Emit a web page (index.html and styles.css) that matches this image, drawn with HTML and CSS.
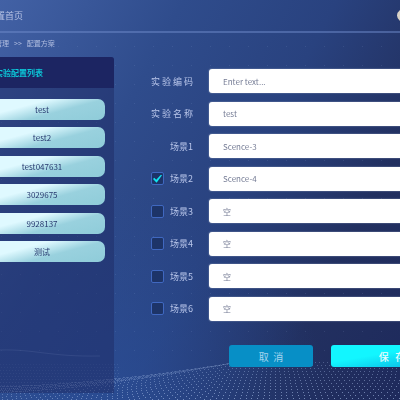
FILE: index.html
```html
<!DOCTYPE html>
<html lang="zh-CN">
<head>
<meta charset="UTF-8">
<meta name="viewport" content="width=device-width, initial-scale=1.0">
<title>配置方案</title>
<link rel="stylesheet" href="styles.css">
</head>
<body>
<canvas id="wave" class="wave"></canvas>
<div class="screen">
<div class="page">
    <header class="header">
        <a href="#" class="home-link">配置首页</a>
        <span class="avatar"></span>
    </header>
    <nav class="breadcrumb">
        <a href="#">管理</a>
        <span>&gt;&gt;</span>
        <a href="#">配置方案</a>
    </nav>
    <div class="main">
        <aside class="sidebar">
            <h2>实验配置列表</h2>
            <div class="config-list">
                <button type="button">test</button>
                <button type="button">test2</button>
                <button type="button">test047631</button>
                <button type="button">3029675</button>
                <button type="button">9928137</button>
                <button type="button">测试</button>
            </div>
        </aside>
        <form class="config-form">
            <div class="fields">
                <div class="row">
                    <div class="row-label"><label for="code">实 验 编 码</label></div>
                    <input type="text" id="code" placeholder="Enter text...">
                </div>
                <div class="row">
                    <div class="row-label"><label for="name">实 验 名 称</label></div>
                    <input type="text" id="name" value="test">
                </div>
                <div class="row">
                    <div class="row-label"><label for="scene1">场景1</label></div>
                    <input type="text" id="scene1" value="Scence-3">
                </div>
                <div class="row">
                    <div class="row-label">
                        <input type="checkbox" aria-label="启用场景2" checked>
                        <label for="scene2">场景2</label>
                    </div>
                    <input type="text" id="scene2" value="Scence-4">
                </div>
                <div class="row">
                    <div class="row-label">
                        <input type="checkbox" aria-label="启用场景3">
                        <label for="scene3">场景3</label>
                    </div>
                    <input type="text" id="scene3" value="空">
                </div>
                <div class="row">
                    <div class="row-label">
                        <input type="checkbox" aria-label="启用场景4">
                        <label for="scene4">场景4</label>
                    </div>
                    <input type="text" id="scene4" value="空">
                </div>
                <div class="row">
                    <div class="row-label">
                        <input type="checkbox" aria-label="启用场景5">
                        <label for="scene5">场景5</label>
                    </div>
                    <input type="text" id="scene5" value="空">
                </div>
                <div class="row">
                    <div class="row-label">
                        <input type="checkbox" aria-label="启用场景6">
                        <label for="scene6">场景6</label>
                    </div>
                    <input type="text" id="scene6" value="空">
                </div>
            </div>
            <div class="actions">
                <button type="button" class="cancel-button">取&nbsp;&nbsp;消</button>
                <button type="button" class="save-button">保&nbsp;&nbsp;&nbsp;存</button>
            </div>
        </form>
    </div>
</div>
</div>
<script src="wave.js"></script>
</body>
</html>
```

FILE: styles.css
```css
* {
    box-sizing: border-box;
    font-family: "Noto Sans CJK SC", "Noto Sans", sans-serif;
}

body {
    margin: 0;
    min-height: 100vh;
    background:
        radial-gradient(circle at 25% 105%, rgba(42, 82, 160, 0.6), transparent 45%),
        linear-gradient(118deg, #4261a5 0%, #2f4c8c 30%, #29427f 55%, #223060 78%, #1e2a5c 100%);
}

.wave {
    position: fixed;
    top: 0;
    left: 0;
    width: 100%;
    height: 100%;
}

.screen {
    position: relative;
    overflow: hidden;
}

.page {
    margin: 0 -30px;
}

.header {
    display: flex;
    justify-content: space-between;
    align-items: center;
    height: 33px;
    padding: 0 14px 0 17px;
    border-bottom: 2px solid rgba(110, 138, 202, 0.5);
}

.home-link {
    font-size: 9px;
    color: #b7c3e4;
    text-decoration: none;
}

.avatar {
    width: 19px;
    height: 15px;
    border-radius: 50%;
    background: #d9d3c8;
}

.breadcrumb {
    display: flex;
    align-items: center;
    gap: 5px;
    height: 20px;
    padding-left: 25px;
    font-size: 7px;
    color: #b0bde0;
}

.breadcrumb a {
    color: inherit;
    text-decoration: none;
}

.main {
    display: flex;
    align-items: flex-start;
    gap: 37px;
    margin-top: 4px;
}

.sidebar {
    flex: none;
    width: 144px;
    min-height: 336px;
    border-radius: 3px 3px 0 0;
    background: rgba(29, 42, 100, 0.5);
}

.sidebar h2 {
    margin: 0;
    padding-left: 25px;
    border-radius: 3px 3px 0 0;
    background: #1c2562;
    font-size: 8px;
    line-height: 31px;
    color: #0cc7d8;
}

.config-list {
    display: flex;
    flex-direction: column;
    justify-content: space-between;
    height: 163px;
    margin: 11px 9px;
}

.config-list button {
    height: 21px;
    padding: 0;
    border: none;
    border-radius: 7px;
    background: linear-gradient(165deg, #dff9ff 35%, #99d1de 62%, #8fccd9 100%);
    font-size: 8px;
    color: #26386e;
    cursor: pointer;
}

.config-form {
    flex: 1;
    padding-top: 12px;
}

.fields {
    display: flex;
    flex-direction: column;
    justify-content: space-between;
    height: 252px;
}

.row {
    display: flex;
    gap: 16px;
}

.row-label {
    display: flex;
    flex: none;
    align-items: center;
    justify-content: flex-end;
    gap: 6px;
    width: 42px;
    font-size: 9px;
    white-space: nowrap;
    color: #b9c6ea;
}

.row input[type=text] {
    flex: 1;
    min-width: 0;
    height: 24px;
    padding: 0 14px;
    border: none;
    border-radius: 3px;
    background: #fff;
    box-shadow: 0 0 1px 1px rgba(130, 145, 180, 0.3);
    font-size: 8px;
    color: #757c95;
}

.row input::placeholder {
    color: #757c95;
}

.row input[type=checkbox] {
    appearance: none;
    display: grid;
    flex: none;
    width: 13px;
    height: 13px;
    margin: 0;
    border: 1px solid #4068c0;
    border-radius: 2px;
    background: #1d3468;
}

.row input[type=checkbox]:checked::before {
    content: "";
    width: 9px;
    height: 8px;
    place-self: center;
    background: #10e4f0;
    clip-path: polygon(0 55%, 14% 38%, 36% 62%, 88% 0, 100% 8%, 40% 100%);
}

.actions {
    display: flex;
    gap: 18px;
    margin-top: 24px;
    padding-left: 78px;
}

.actions button {
    height: 22px;
    padding: 0;
    border: none;
    border-radius: 3px;
    font-size: 10px;
    cursor: pointer;
}

.cancel-button {
    width: 84px;
    background: #078fc6;
    color: #a5d4ee;
}

.actions .save-button {
    flex: none;
    width: 122px;
    background: linear-gradient(170deg, #12f6ff 40%, #08a9dd 100%);
    font-weight: 500;
    color: #e8fcff;
}
```

FILE: wave.js
```js
const canvas = document.getElementById('wave');
const ctx = canvas.getContext('2d');

// top edge of the dotted surface, measured up from the bottom
function ridge(x) {
    if (x > 235) {
        return 38;
    }
    const t = Math.max(0, x) / 235;
    return 14 + 24 * Math.pow(t, 1.6);
}

function dot(x, y, size, alpha) {
    ctx.fillStyle = `rgba(175, 198, 238, ${alpha})`;
    ctx.fillRect(Math.round(x), Math.round(y), size, size);
}

function draw() {
    const w = canvas.width = window.innerWidth;
    const h = canvas.height = window.innerHeight;

    // faint background grid
    for (let y = 46; y < h - 40; y += 19) {
        for (let x = 1; x < w; x += 19) {
            dot(x, y, 1, 0.12);
        }
    }

    // fan of dotted lines
    const center = 275;
    for (let i = -80; i <= 60; i++) {
        const top = center + i * 4;
        const start = h - ridge(top);
        for (let y = start; y < h; y += 3) {
            const x = top + i * 2 * (y - start) / 38;
            dot(x, y, 1, 0.3 + 0.3 * (y - start) / 38);
        }
    }

    // bright band along the left slope
    for (let x = 0; x < 235; x += 2) {
        for (let k = 0; k < 4; k++) {
            dot(x + k % 2, h - ridge(x) + k * 2 * (1 - x / 235), 1, 0.35 * (1 - x / 400));
        }
    }

    // far wave on the left
    for (let y = h - 36; y < h - 14; y += 3) {
        for (let x = 0; x < 120; x += 3) {
            dot(x + (y % 2), y, 1, 0.12 + 0.1 * (y - h + 36) / 22);
        }
    }
    ctx.strokeStyle = 'rgba(150, 175, 225, 0.28)';
    ctx.beginPath();
    ctx.moveTo(0, h - 50);
    ctx.bezierCurveTo(35, h - 51, 50, h - 43, 100, h - 44);
    ctx.stroke();
}

draw();
window.addEventListener('resize', draw);
```
